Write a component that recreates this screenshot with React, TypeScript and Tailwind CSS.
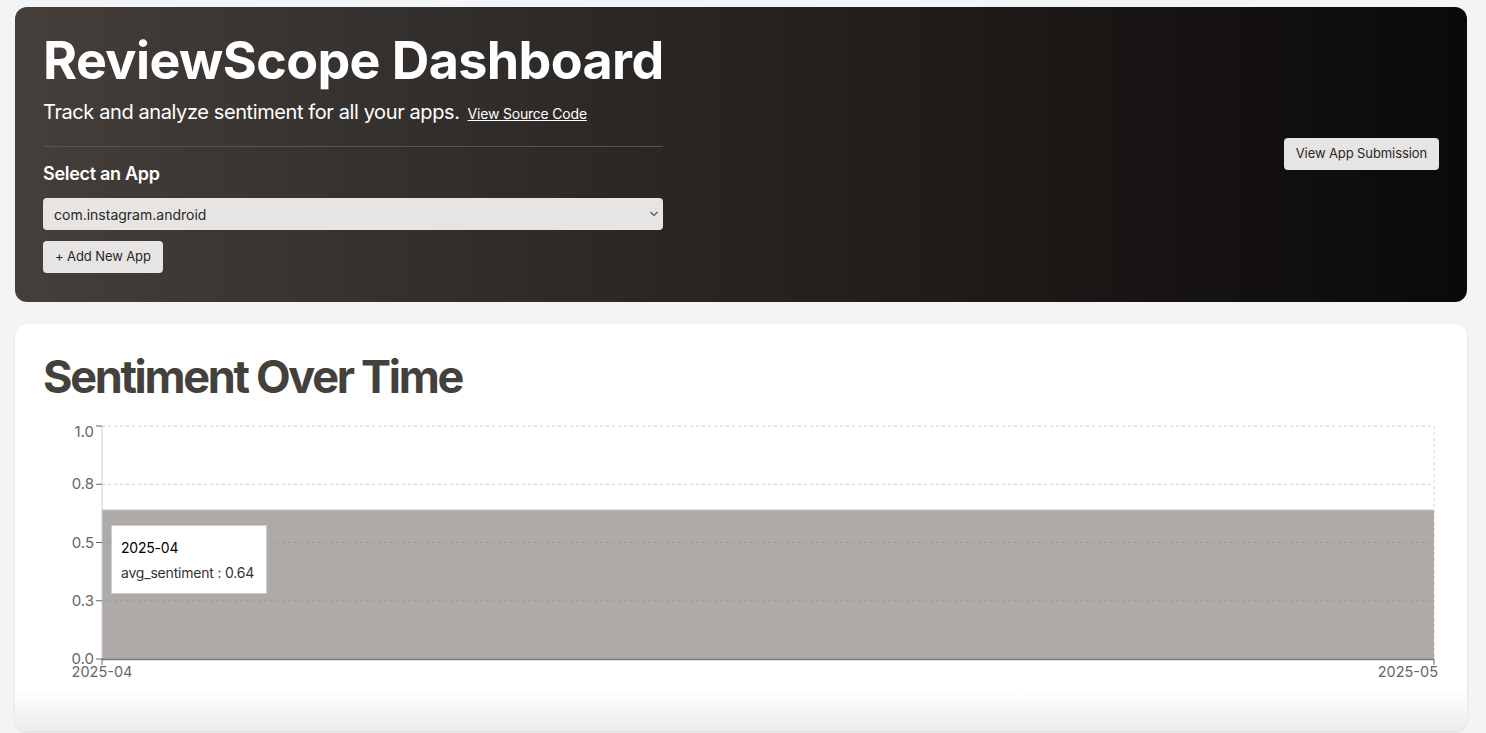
import React from 'react';

const yTicks = [
  { label: '1.0', y: 6 },
  { label: '0.8', y: 64.25 },
  { label: '0.5', y: 122.5 },
  { label: '0.3', y: 180.75 },
  { label: '0.0', y: 239 },
];

const SentimentChart = () => {
  return (
    <div className="relative mt-[21px] h-[270px] w-full">
      <svg width="1396" height="270" viewBox="0 0 1396 270" className="block overflow-visible">
        {/* grid */}
        {yTicks.map((t) => (
          <line key={t.label} x1={59} x2={1391} y1={t.y} y2={t.y} stroke="#ccc" strokeDasharray="3 3" />
        ))}
        <line x1={1391} x2={1391} y1={6} y2={239} stroke="#ccc" strokeDasharray="3 3" />

        {/* area */}
        <rect x={59} y={90} width={1332} height={149} fill="#aeaaa7" />
        <line x1={59} x2={1391} y1={90} y2={90} stroke="#c9c5c2" />
        {yTicks.slice(2, 4).map((t) => (
          <line key={'o' + t.label} x1={59} x2={1391} y1={t.y} y2={t.y} stroke="#9c9896" strokeDasharray="3 3" />
        ))}

        {/* y axis */}
        <line x1={59} x2={59} y1={6} y2={239} stroke="#cfcfcf" />
        {yTicks.map((t, i) => (
          <g key={'t' + t.label}>
            <line x1={53} x2={59} y1={t.y} y2={t.y} stroke="#666" />
            <text x={51} y={t.y + (i === 0 ? 11 : 5)} textAnchor="end" fontSize="15" fill="#666" fontFamily="Inter, 'Liberation Sans', sans-serif">
              {t.label}
            </text>
          </g>
        ))}

        {/* x axis */}
        <line x1={59} x2={1391} y1={239.5} y2={239.5} stroke="#777" strokeWidth="1.5" />
        <line x1={59} x2={59} y1={239} y2={245} stroke="#666" />
        <line x1={1391} x2={1391} y1={239} y2={245} stroke="#666" />
        <text x={59} y={257} textAnchor="middle" fontSize="14.5" fill="#666" fontFamily="Inter, 'Liberation Sans', sans-serif">
          2025-04
        </text>
        <text x={1395} y={257} textAnchor="end" fontSize="14.5" fill="#666" fontFamily="Inter, 'Liberation Sans', sans-serif">
          2025-05
        </text>
      </svg>

      {/* tooltip */}
      <div className="absolute left-[68px] top-[105px] w-[156px] whitespace-nowrap border border-[#ccc] bg-white px-[9px] pt-[9px] pb-[8px] text-[14px] leading-[25px] tracking-[-0.2px]">
        <p className="text-black">2025-04</p>
        <p className="text-[#333]">avg_sentiment : 0.64</p>
      </div>
    </div>
  );
};

export default function App() {
  return (
    <div className="min-h-screen bg-[#f3f4f6] pl-[15px] pr-[19px] pt-[7px] font-['Inter','Liberation_Sans',sans-serif]">
      {/* Header */}
      <header className="flex items-center justify-between rounded-xl bg-linear-to-r from-[#443f3b] to-[#0c0a09] px-7 pt-7 pb-[29px]">
        <div className="w-[620px]">
          <h1 className="whitespace-nowrap text-[52px] font-bold leading-none tracking-[-0.6px] text-white">ReviewScope Dashboard</h1>
          <p className="mt-[11px] whitespace-nowrap text-xl leading-7 tracking-[-0.4px] text-white">
            Track and analyze sentiment for all your apps.
            <a href="#" className="ml-2 text-[14px] tracking-[-0.2px] underline">
              View Source Code
            </a>
          </p>
          <div className="mt-[18px] h-px bg-[#4b5563]" />
          <h2 className="mt-[13px] text-lg font-semibold leading-7 tracking-[-0.3px] text-white">Select an App</h2>
          <div className="relative mt-[10px]">
            <select className="h-8 w-full appearance-none rounded bg-[#e7e5e4] px-[11px] text-[14px] text-[#292524] outline-none">
              <option>com.instagram.android</option>
            </select>
            <svg className="pointer-events-none absolute right-[4px] top-[12px]" width="10" height="8" viewBox="0 0 10 8">
              <path d="M1.5 2 L5 5.5 L8.5 2" fill="none" stroke="#57534e" strokeWidth="1.2" />
            </svg>
          </div>
          <button className="mt-[11px] h-8 rounded bg-[#e7e5e4] px-3 text-[13px] tracking-[-0.1px] text-[#292524]">+ Add New App</button>
        </div>
        <button className="h-8 rounded bg-[#e7e5e4] px-3 text-[13px] tracking-[-0.1px] text-[#292524]">View App Submission</button>
      </header>

      {/* Chart card */}
      <section className="mt-[22px] rounded-xl bg-white px-7 pt-[30px] shadow-sm">
        <h2 className="whitespace-nowrap text-[45px] font-bold leading-none tracking-[-2.3px] text-[#44403c]">Sentiment Over Time</h2>
        <SentimentChart />
        <div className="-mx-7 h-[41px] rounded-b-xl bg-linear-to-b from-white to-[#ececec]" />
      </section>
    </div>
  );
}
